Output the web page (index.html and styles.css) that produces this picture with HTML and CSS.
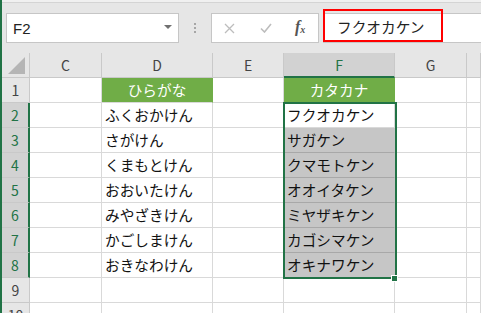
FILE: index.html
```html
<!DOCTYPE html>
<html lang="ja">
<head>
    <meta charset="UTF-8">
    <title>Sheet</title>
    <link rel="stylesheet" href="styles.css">
</head>
<body>
    <div class="app">
        <div class="topline"></div>
        <div class="bar">
            <div class="namebox">
                <span>F2</span>
                <span class="arrow"></span>
            </div>
            <div class="dots"><i></i><i></i><i></i></div>
            <div class="btns">
                <svg class="x" width="11" height="11" viewBox="0 0 11 11"><path d="M1 1L10 10M10 1L1 10" stroke="#bdbdbd" stroke-width="1.3" fill="none"/></svg>
                <svg class="ok" width="12" height="10" viewBox="0 0 12 10"><path d="M1 5.5L4.5 9L11 1" stroke="#bdbdbd" stroke-width="1.6" fill="none"/></svg>
                <span class="fx">f<sub>x</sub></span>
            </div>
            <div class="formula">フクオカケン</div>
            <div class="mark"></div>
        </div>
        <div class="sheet">
            <div class="h corner">
                <svg width="18" height="17" viewBox="0 0 18 17"><polygon points="17,0 17,17 0,17" fill="#b5b5b5"/></svg>
            </div>
            <div class="h">C</div>
            <div class="h">D</div>
            <div class="h">E</div>
            <div class="h sel col">F</div>
            <div class="h">G</div>
            <div class="h"></div>

            <div class="h rh">1</div>
            <div class="c"></div>
            <div class="c head">ひらがな</div>
            <div class="c"></div>
            <div class="c head">カタカナ</div>
            <div class="c"></div>
            <div class="c"></div>

            <div class="h rh sel">2</div>
            <div class="c"></div>
            <div class="c">ふくおかけん</div>
            <div class="c"></div>
            <div class="c">フクオカケン</div>
            <div class="c"></div>
            <div class="c"></div>

            <div class="h rh sel">3</div>
            <div class="c"></div>
            <div class="c">さがけん</div>
            <div class="c"></div>
            <div class="c hl">サガケン</div>
            <div class="c"></div>
            <div class="c"></div>

            <div class="h rh sel">4</div>
            <div class="c"></div>
            <div class="c">くまもとけん</div>
            <div class="c"></div>
            <div class="c hl">クマモトケン</div>
            <div class="c"></div>
            <div class="c"></div>

            <div class="h rh sel">5</div>
            <div class="c"></div>
            <div class="c">おおいたけん</div>
            <div class="c"></div>
            <div class="c hl">オオイタケン</div>
            <div class="c"></div>
            <div class="c"></div>

            <div class="h rh sel">6</div>
            <div class="c"></div>
            <div class="c">みやざきけん</div>
            <div class="c"></div>
            <div class="c hl">ミヤザキケン</div>
            <div class="c"></div>
            <div class="c"></div>

            <div class="h rh sel">7</div>
            <div class="c"></div>
            <div class="c">かごしまけん</div>
            <div class="c"></div>
            <div class="c hl">カゴシマケン</div>
            <div class="c"></div>
            <div class="c"></div>

            <div class="h rh sel">8</div>
            <div class="c"></div>
            <div class="c">おきなわけん</div>
            <div class="c"></div>
            <div class="c hl last">オキナワケン</div>
            <div class="c"></div>
            <div class="c"></div>

            <div class="h rh">9</div>
            <div class="c"></div>
            <div class="c"></div>
            <div class="c"></div>
            <div class="c"></div>
            <div class="c"></div>
            <div class="c"></div>

            <div class="h rh">10</div>
            <div class="c"></div>
            <div class="c"></div>
            <div class="c"></div>
            <div class="c"></div>
            <div class="c"></div>
            <div class="c"></div>

            <div class="selection"></div>
            <div class="handle"></div>
        </div>
    </div>
</body>
</html>
```

FILE: styles.css
```css
body {
    margin: 0;
    background: #e6e6e6;
    font-family: "Noto Sans CJK JP", "Noto Sans", sans-serif;
    overflow: hidden;
}
.app {
    width: 481px;
    height: 313px;
    border-left: 2px solid #217346;
    box-sizing: border-box;
    overflow: hidden;
}
.topline {
    height: 2px;
    background: #f0f0f0;
    border-bottom: 1px solid #d4d4d4;
}
.bar {
    position: relative;
    display: flex;
    align-items: flex-start;
    height: 50px;
    padding: 10px 0 0 4px;
    box-sizing: border-box;
}
.namebox {
    width: 173px;
    height: 30px;
    background: #fff;
    border: 1px solid #c6c6c6;
    box-sizing: border-box;
    display: flex;
    align-items: center;
    justify-content: space-between;
    padding: 0 6px 0 6px;
    font-family: "Liberation Sans", sans-serif;
    font-size: 15px;
    color: #222;
}
.arrow {
    width: 0;
    height: 0;
    border-left: 4px solid transparent;
    border-right: 4px solid transparent;
    border-top: 4px solid #707070;
    margin-top: -2px;
}
.dots {
    width: 32px;
    height: 30px;
    display: flex;
    flex-direction: column;
    align-items: center;
    justify-content: center;
    gap: 2px;
}
.dots i {
    width: 2px;
    height: 2px;
    background: #a6a6a6;
}
.btns {
    width: 108px;
    height: 30px;
    background: #fff;
    border: 1px solid #c6c6c6;
    box-sizing: border-box;
    display: flex;
    align-items: center;
}
.x { margin-left: 12px; }
.ok { margin-left: 25px; }
.fx {
    margin-left: 23px;
    font-family: "Liberation Serif", serif;
    font-style: italic;
    font-weight: bold;
    color: #555;
    font-size: 16px;
    line-height: 16px;
}
.fx sub {
    font-size: 10px;
    vertical-align: -1px;
}
.formula {
    flex: 1;
    height: 30px;
    margin-left: 4px;
    background: #fff;
    border: 1px solid #c6c6c6;
    border-right: none;
    box-sizing: border-box;
    padding-left: 13px;
    line-height: 26px;
    font-size: 14.67px;
    color: #222;
}
.mark {
    position: absolute;
    left: 321px;
    top: 6px;
    width: 120px;
    height: 33px;
    border: 2px solid #ff0000;
    box-sizing: border-box;
}
.sheet {
    position: relative;
    display: grid;
    grid-template-columns: 28px 72px 111px 71px 111px 72px 1fr;
    grid-auto-rows: 25px;
    background: #fff;
}
.c {
    border-right: 1px solid #d9d9d9;
    border-bottom: 1px solid #d9d9d9;
    box-sizing: border-box;
    font-size: 14.67px;
    line-height: 24px;
    padding-left: 3px;
    color: #111;
    white-space: nowrap;
    overflow: hidden;
}
.h {
    background: #e6e6e6;
    border-right: 1px solid #c9c9c9;
    border-bottom: 1px solid #c9c9c9;
    box-sizing: border-box;
    text-align: center;
    font-size: 14px;
    line-height: 24px;
    color: #444;
}
.corner {
    position: relative;
}
.corner svg {
    position: absolute;
    right: 3px;
    bottom: 3px;
}
.h.sel {
    background: #d2d2d2;
    color: #217346;
}
.h.col {
    border-bottom: 2px solid #217346;
}
.h.rh.sel {
    border-right: 2px solid #217346;
}
.head {
    background: #70ad47;
    color: #fff;
    text-align: center;
    padding-left: 0;
    border-right-color: #70ad47;
}
.hl {
    background: #c6c6c6;
    border-bottom-color: #a8a8a8;
    border-right-color: #c6c6c6;
}
.selection {
    position: absolute;
    left: 281px;
    top: 49px;
    width: 114px;
    height: 177px;
    border: 2px solid #217346;
    box-sizing: border-box;
}
.handle {
    position: absolute;
    left: 389px;
    top: 222px;
    width: 5px;
    height: 5px;
    background: #217346;
    border: 1px solid #fff;
}
```
